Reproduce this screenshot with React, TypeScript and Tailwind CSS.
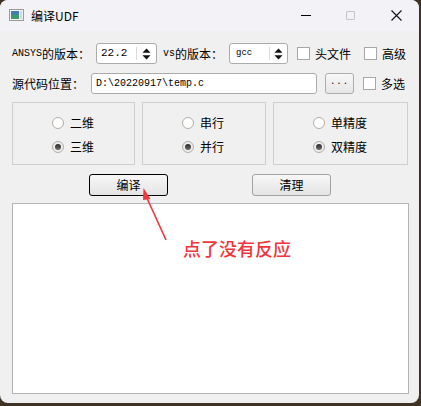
import React from 'react';

const cjk = { fontFamily: '"Noto Sans CJK SC", "Microsoft YaHei", sans-serif' };
const mono = { fontFamily: '"Liberation Mono", "DejaVu Sans Mono", monospace' };

const CheckBox: React.FC<{ label: string }> = ({ label }) => (
  <div className="flex items-center">
    <div className="w-[13px] h-[13px] border border-[#a7a7a7] bg-white" />
    <span className="ml-[5px] text-[12px] text-black" style={cjk}>{label}</span>
  </div>
);

const Radio: React.FC<{ label: string; checked?: boolean }> = ({ label, checked }) => (
  <div className="flex items-center h-[14px]">
    <div
      className={
        'w-[12px] h-[12px] rounded-full border border-[#b3aca4] flex items-center justify-center ' +
        (checked ? 'bg-[#ededed]' : 'bg-white')
      }
    >
      {checked && <div className="w-[6px] h-[6px] rounded-full bg-gradient-to-b from-[#2c2c2c] to-[#6d6d6d]" />}
    </div>
    <span className="ml-[6px] text-[12px] text-black" style={cjk}>{label}</span>
  </div>
);

const UpDown: React.FC = () => (
  <svg width="9" height="12" viewBox="0 0 9 12" className="block">
    <path d="M4.5 0.5 L8.5 4.8 L0.5 4.8 Z" fill="#111" />
    <path d="M4.5 11.5 L8.5 7.2 L0.5 7.2 Z" fill="#111" />
  </svg>
);

const Group: React.FC<{ width: string; a: string; b: string }> = ({ width, a, b }) => (
  <div className={`${width} h-[63px] border border-[#cfcfcf] flex flex-col pl-[39px] pt-[13px] gap-[10px]`}>
    <Radio label={a} />
    <Radio label={b} checked />
  </div>
);

export default function App() {
  return (
    <div className="w-[421px] h-[406px] bg-[#3f3326]">
      <div className="relative w-[419px] h-[403px] rounded-[8px] overflow-hidden bg-[#f0f0f0]">
        {/* Title bar */}
        <div className="h-[31px] bg-[#f3f2f6] flex items-center">
          <svg width="15" height="12" viewBox="0 0 15 12" className="ml-[9px] mt-[-2px]">
            <rect x="0.5" y="0.5" width="14" height="11" fill="#f4f4f4" stroke="#9a9a9a" />
            <rect x="2" y="2" width="8" height="8" fill="#3f7fa8" />
            <rect x="2" y="6" width="8" height="4" fill="#3e9a6a" />
            <rect x="11" y="2" width="2" height="8" fill="#c9dbe6" />
          </svg>
          <span className="ml-[7px] text-[12px] text-black" style={cjk}>编译UDF</span>
          <div className="flex-1" />
          <div className="w-[10px] h-[1px] bg-black mr-[35px]" />
          <div className="w-[9px] h-[9px] border border-[#c4c4c4] rounded-[1px] mr-[36px]" />
          <svg width="11" height="11" viewBox="0 0 11 11" className="mr-[17px]">
            <path d="M0.5 0.5 L10.5 10.5 M10.5 0.5 L0.5 10.5" stroke="#111" strokeWidth="1.1" />
          </svg>
        </div>

        <div className="pl-[12px]">
          {/* Row 1 */}
          <div className="mt-[12px] h-[21px] flex items-center">
            <div className="w-[84px] flex items-center text-black">
              <span className="text-[10px]" style={mono}>ANSYS</span>
              <span className="text-[12px]" style={cjk}>的版本：</span>
            </div>
            <div className="w-[61px] h-[21px] border border-[#ababab] rounded-[3px] bg-white flex items-center">
              <span className="ml-[4px] w-[35px] text-[11px] text-black" style={mono}>22.2</span>
              <div className="w-[1px] h-[13px] bg-[#dcdcdc]" />
              <div className="flex-1 flex justify-center"><UpDown /></div>
            </div>
            <div className="ml-[6px] w-[66px] flex items-center text-black">
              <span className="text-[10px]" style={mono}>vs</span>
              <span className="text-[12px]" style={cjk}>的版本：</span>
            </div>
            <div className="w-[59px] h-[21px] border border-[#ababab] rounded-[3px] bg-white flex items-center">
              <span className="ml-[6px] w-[33px] text-[9px] text-black" style={mono}>gcc</span>
              <div className="w-[1px] h-[13px] bg-[#dcdcdc]" />
              <div className="flex-1 flex justify-center"><UpDown /></div>
            </div>
            <div className="ml-[9px]"><CheckBox label="头文件" /></div>
            <div className="ml-[13px]"><CheckBox label="高级" /></div>
          </div>

          {/* Row 2 */}
          <div className="mt-[9px] h-[21px] flex items-center">
            <div className="w-[79px] text-[12px] text-black" style={cjk}>源代码位置：</div>
            <div className="w-[226px] h-[21px] border border-[#ababab] rounded-[3px] bg-white flex items-center">
              <span className="ml-[4px] text-[10px] text-black" style={mono}>D:\20220917\temp.c</span>
            </div>
            <div className="ml-[8px] w-[29px] h-[21px] border border-[#adadad] rounded-[3px] bg-gradient-to-b from-[#f7f7f7] to-[#e6e6e6] flex items-center justify-center">
              <span className="text-[9px] text-black tracking-[1px] mt-[-1px]" style={mono}>...</span>
            </div>
            <div className="ml-[9px]"><CheckBox label="多选" /></div>
          </div>

          {/* Radio groups */}
          <div className="mt-[8px] flex gap-[7px]">
            <Group width="w-[123px]" a="二维" b="三维" />
            <Group width="w-[124px]" a="串行" b="并行" />
            <Group width="w-[135px]" a="单精度" b="双精度" />
          </div>

          {/* Buttons */}
          <div className="mt-[9px] flex">
            <div className="ml-[77px] w-[79px] h-[22px] border border-black rounded-[3px] bg-gradient-to-b from-[#f7f7f7] to-[#e4e4e4] flex items-center justify-center">
              <span className="text-[12px] text-black" style={cjk}>编译</span>
            </div>
            <div className="ml-[84px] w-[79px] h-[22px] border border-[#a3a3a3] rounded-[3px] bg-gradient-to-b from-[#f7f7f7] to-[#e4e4e4] flex items-center justify-center">
              <span className="text-[12px] text-black" style={cjk}>清理</span>
            </div>
          </div>

          {/* Output area */}
          <div className="mt-[7px] w-[397px] h-[191px] border border-[#b4b4b4] bg-white" />
        </div>

        {/* Red annotation */}
        <svg className="absolute left-0 top-0" width="419" height="403" viewBox="0 0 419 403">
          <path d="M166 240 L146 196" stroke="#f0353d" strokeWidth="1.6" />
          <path d="M143.5 188 L150.5 199 L143 200 Z" fill="#f0353d" />
        </svg>
        <div className="absolute left-[183px] top-[237px] text-[18px] leading-[22px] font-medium text-[#f0353d]" style={cjk}>
          点了没有反应
        </div>
      </div>
    </div>
  );
}
